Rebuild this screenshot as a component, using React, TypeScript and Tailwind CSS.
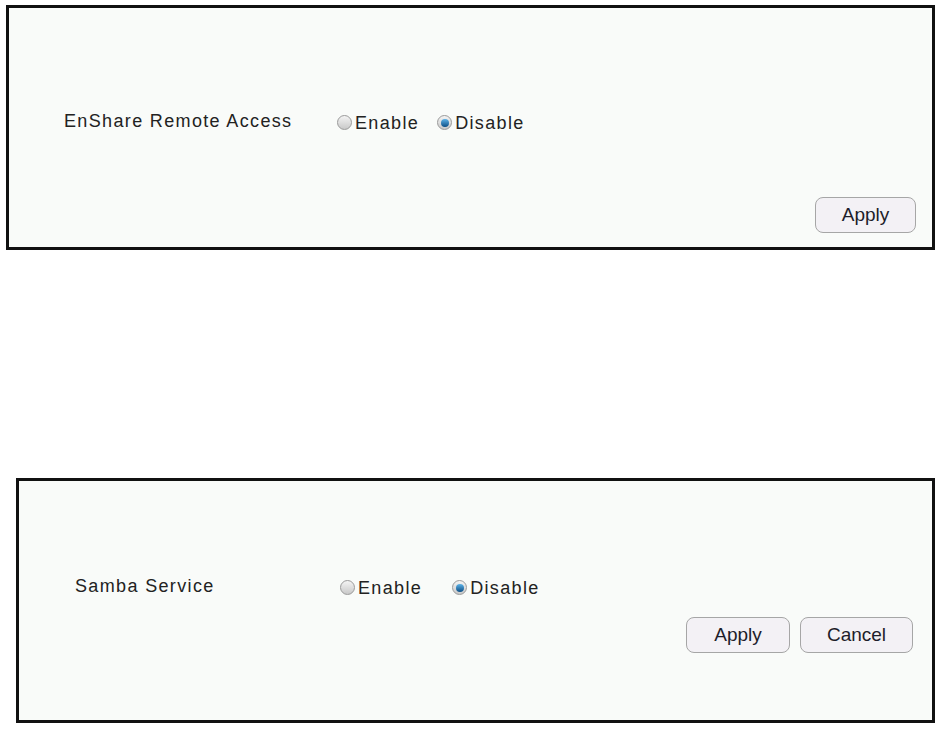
import React, { useState } from 'react';

const font = { fontFamily: '"Liberation Sans", Arial, sans-serif' };

const Radio = ({ checked, onClick }: { checked: boolean; onClick: () => void }) => (
  <span
    onClick={onClick}
    className="w-[15px] h-[15px] rounded-full border border-[#9a9a9a] bg-gradient-to-b from-[#f4f4f4] to-[#c9c9c9] flex items-center justify-center shrink-0 cursor-pointer"
  >
    {checked && <span className="w-[8px] h-[8px] rounded-full bg-gradient-to-b from-[#5cb3e8] to-[#0b4f86]" />}
  </span>
);

const Button = ({ label, width }: { label: string; width: string }) => (
  <button
    className={`${width} h-[36px] rounded-[8px] border border-[#a6a6a6] bg-[#f3f1f5] text-[19px] text-[#1d1d2a] flex items-center justify-center`}
  >
    {label}
  </button>
);

interface ToggleProps {
  label: string;
  labelWidth: string;
  spacing: string;
}

const Toggle: React.FC<ToggleProps> = ({ label, labelWidth, spacing }) => {
  const [enabled, setEnabled] = useState(false);
  return <div className="flex items-center h-[24px] text-[18px] tracking-[1.35px] text-[#222]">
      <span className={`${labelWidth} shrink-0 leading-none`}>{label}</span>
      <div className={`flex items-center ${spacing} mt-[3px]`}>
        <label className="flex items-center gap-[3px]">
          <Radio checked={enabled} onClick={() => setEnabled(true)} />
          <span className="leading-none">Enable</span>
        </label>
        <label className="flex items-center gap-[3px]">
          <Radio checked={!enabled} onClick={() => setEnabled(false)} />
          <span className="leading-none">Disable</span>
        </label>
      </div>
    </div>;
};

export default function App() {
  return <div className="bg-white w-[945px] h-[729px] pt-[5px]" style={font}>
      {/* EnShare remote access */}
      <section className="ml-[6px] w-[929px] h-[245px] border-[3px] border-[#111] bg-[#f9fbf9] flex flex-col pl-[55px] pr-[16px] pt-[101px]">
        <Toggle label="EnShare Remote Access" labelWidth="w-[273px]" spacing="gap-[18px]" />
        <div className="flex justify-end mt-[64px]">
          <Button label="Apply" width="w-[101px]" />
        </div>
      </section>

      {/* Samba service */}
      <section className="mt-[228px] ml-[16px] w-[919px] h-[245px] border-[3px] border-[#111] bg-[#f9fbf9] flex flex-col pl-[56px] pr-[19px] pt-[93px]">
        <Toggle label="Samba Service" labelWidth="w-[265px]" spacing="gap-[30px]" />
        <div className="flex justify-end gap-[10px] mt-[19px]">
          <Button label="Apply" width="w-[104px]" />
          <Button label="Cancel" width="w-[113px]" />
        </div>
      </section>
    </div>;
}
